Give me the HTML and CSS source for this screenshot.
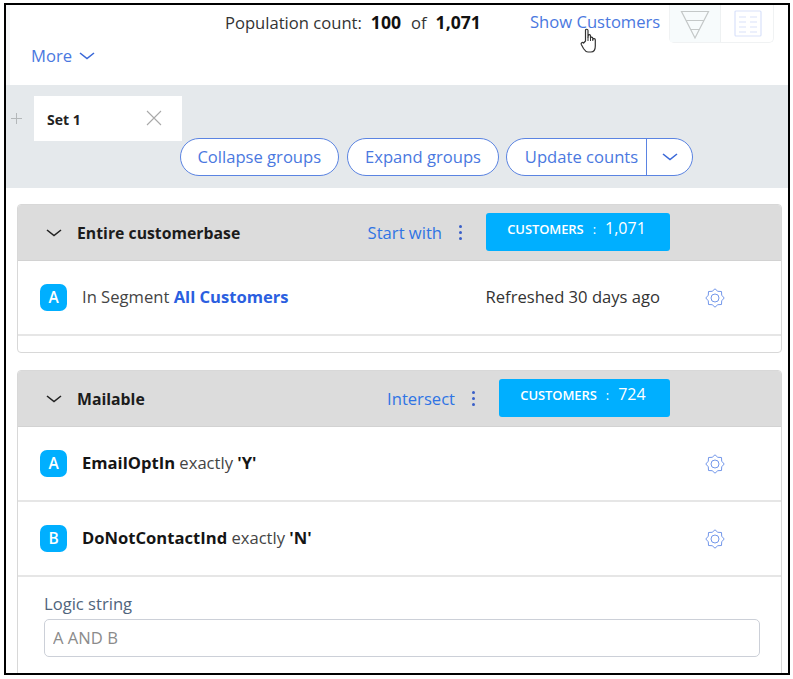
FILE: index.html
```html
<!DOCTYPE html>
<html lang="en">

<head>
    <meta charset="UTF-8">
    <title>Segment groups</title>
    <link rel="stylesheet" href="styles.css">
</head>

<body>
    <svg class="defs" width="0" height="0">
        <symbol id="gear" viewBox="0 0 20 20">
            <path d="M10 .8 12.8 3.3 16.5 3.5 16.7 7.2 19.2 10 16.7 12.8 16.5 16.5 12.8 16.7 10 19.2 7.2 16.7 3.5 16.5 3.3 12.8 .8 10 3.3 7.2 3.5 3.5 7.2 3.3Z" fill="none" stroke="currentColor" stroke-width="1" stroke-linejoin="round"/>
            <circle cx="10" cy="10" r="4" fill="none" stroke="currentColor" stroke-width="1"/>
        </symbol>
        <symbol id="chev" viewBox="0 0 16 8">
            <path d="M1 1 8 6.6 15 1" fill="none" stroke="currentColor" stroke-width="1.6"/>
        </symbol>
    </svg>

    <div class="frame">
        <!-- Top bar -->
        <div class="top">
            <div class="top-row">
                <span class="count">Population count:<b>100</b>of<b>1,071</b></span>
                <a class="show-link">Show Customers</a>
                <div class="views">
                    <div class="view view-on">
                        <svg width="30" height="30" viewBox="0 0 30 30" fill="none" stroke="#c4c8c8" stroke-width="1.2">
                            <path d="M1.5 1.5H28.5L15 28Z"/>
                            <path d="M6 10.5H24M10.5 19.5H19.5"/>
                        </svg>
                    </div>
                    <div class="view view-table">
                        <svg width="28" height="28" viewBox="0 0 28 28" fill="none" stroke="#d9e2fa" stroke-width="1.2">
                            <rect x="1" y="1" width="26" height="25" rx="1"/>
                            <path d="M5 7H12M16 7H23M5 12H12M16 12H23M5 17H12M16 17H23M5 22H12M16 22H23"/>
                        </svg>
                    </div>
                </div>
            </div>
            <a class="more">More <svg class="more-chev" width="16" height="8"><use href="#chev"/></svg></a>
        </div>

        <!-- Set tabs and buttons -->
        <div class="toolbar">
            <div class="tab-row">
                <svg class="plus" width="11" height="11" viewBox="0 0 11 11" stroke="#b4b8ba" stroke-width="1"><path d="M5.5 0V11M0 5.5H11"/></svg>
                <div class="tab">
                    <span>Set 1</span>
                    <svg width="16" height="16" viewBox="0 0 16 16" stroke="#a9a9a9" stroke-width="1.1"><path d="M1 1 15 15M15 1 1 15"/></svg>
                </div>
            </div>
            <div class="btn-row">
                <button class="pill">Collapse groups</button>
                <button class="pill">Expand groups</button>
                <div class="split">
                    <button class="split-main">Update counts</button>
                    <button class="split-arrow"><svg width="16" height="8"><use href="#chev"/></svg></button>
                </div>
            </div>
        </div>

        <div class="groups">
            <section class="card card-first">
                <div class="card-head">
                    <svg class="head-chev" width="16" height="8"><use href="#chev"/></svg>
                    <h3>Entire customerbase</h3>
                    <a class="action">Start with</a>
                    <span class="dots"><i></i><i></i><i></i></span>
                    <div class="badge badge-wide"><span class="badge-label">CUSTOMERS</span><span class="badge-sep">:</span><span class="badge-num">1,071</span></div>
                </div>
                <div class="rule-row">
                    <span class="letter">A</span>
                    <p class="rule-text">In Segment <a>All Customers</a></p>
                    <span class="refreshed">Refreshed 30 days ago</span>
                    <svg class="gear" width="20" height="20"><use href="#gear"/></svg>
                </div>
            </section>

            <section class="card">
                <div class="card-head">
                    <svg class="head-chev" width="16" height="8"><use href="#chev"/></svg>
                    <h3>Mailable</h3>
                    <a class="action">Intersect</a>
                    <span class="dots"><i></i><i></i><i></i></span>
                    <div class="badge"><span class="badge-label">CUSTOMERS</span><span class="badge-sep">:</span><span class="badge-num">724</span></div>
                </div>
                <div class="rule-row">
                    <span class="letter">A</span>
                    <p class="rule-text"><b>EmailOptIn</b> exactly <b>'Y'</b></p>
                    <svg class="gear" width="20" height="20"><use href="#gear"/></svg>
                </div>
                <div class="rule-row">
                    <span class="letter">B</span>
                    <p class="rule-text"><b>DoNotContactInd</b> exactly <b>'N'</b></p>
                    <svg class="gear" width="20" height="20"><use href="#gear"/></svg>
                </div>
                <div class="logic">
                    <label for="logic">Logic string</label>
                    <input type="text" id="logic" placeholder="A AND B">
                </div>
            </section>
        </div>

        <!-- Mouse pointer caught in the capture -->
        <svg class="hand" width="18" height="25" viewBox="0 0 18 25">
            <path d="M5.5 13V2.5C5.5.8 8 .8 8 2.5V9.5L8.3 7.5C8.6 6.2 10.4 6.4 10.5 7.8V10C10.7 8.8 12.6 8.9 12.8 10.2V11.2C13.2 10.2 15.2 10.4 15.3 11.8V18C15.3 21 14 24 11 24H8C5.5 24 4.8 22.5 3.5 20.5L1.3 16.5C.6 15 2.4 13.8 3.6 15Z" fill="#fff" stroke="#333" stroke-width="1.2" stroke-linejoin="round"/>
            <path d="M8 9.5V13M10.5 10V13M12.8 11V13" fill="none" stroke="#333" stroke-width="1"/>
        </svg>
    </div>
</body>

</html>
```

FILE: styles.css
```css
/* Basic styling */
* {
    box-sizing: border-box;
}

body {
    margin: 0;
    background: #ffffff;
    font-family: "Open Sans", "Liberation Sans", sans-serif;
    font-size: 16.6px;
    color: #333;
}

a {
    color: #4a78e0;
}

.defs {
    display: block;
    height: 0;
}

.frame {
    position: relative;
    width: 786px;
    height: 672px;
    margin: 3px 0 0 4px;
    border: 2px solid #000;
    background: #fff;
    overflow: hidden;
}

/* Top bar */
.top {
    height: 80px;
    border-left: 4px solid #f6f7f8;
    background: #fff;
}

.top-row {
    display: flex;
    align-items: flex-start;
    height: 38px;
    padding-left: 215px;
}

.count {
    width: 305px;
    padding-top: 5px;
    white-space: nowrap;
}

.count b {
    margin: 0 10px 0 9px;
    font-size: 17.6px;
    font-weight: 700;
    color: #111;
}

.show-link {
    width: 139px;
    padding-top: 5px;
    white-space: nowrap;
}

.views {
    display: flex;
    width: 105px;
    height: 38px;
    border: 1px solid #f0f2f3;
    border-top: 0;
    border-radius: 0 0 5px 5px;
}

.view {
    display: flex;
    justify-content: center;
    padding-top: 5px;
    flex: 1;
}

.view-on {
    background: #f7fbfc;
    border-right: 1px solid #eef1f2;
}

.view-table {
    padding-left: 3px;
}

.more {
    display: block;
    margin: 2px 0 0 21px;
    line-height: 22px;
}

.more-chev {
    margin-left: 3px;
    color: #3a68d8;
    vertical-align: 2px;
}

/* Tabs and buttons */
.toolbar {
    height: 103px;
    background: #e5e9ec;
}

.tab-row {
    display: flex;
    align-items: flex-start;
    height: 52.5px;
    padding: 11px 0 0 5px;
}

.plus {
    flex: none;
    margin: 17px 12px 0 0;
}

.tab {
    display: flex;
    justify-content: space-between;
    width: 148px;
    height: 45px;
    padding: 14px 20px 0 13px;
    background: #fff;
    font-size: 14px;
    font-weight: 700;
    color: #222;
    line-height: 20px;
}

.btn-row {
    display: flex;
    gap: 8px;
    padding-left: 173.5px;
}

.pill,
.split {
    height: 38px;
    border: 1px solid #5b84e2;
    border-radius: 19px;
    background: #fff;
    color: #4a78e0;
    font: 16.6px "Open Sans", "Liberation Sans", sans-serif;
}

.pill {
    width: 159.5px;
    padding: 0;
}

.pill + .pill {
    width: 152px;
}

.split {
    display: flex;
    width: 187px;
    margin-left: -1px;
    overflow: hidden;
}

.split button {
    border: 0;
    background: none;
    color: #4a78e0;
    font: inherit;
    padding: 0;
}

.split .split-main {
    width: 140px;
    padding-left: 10px;
    border-right: 1px solid #5b84e2;
}

.split-arrow {
    flex: 1;
}

.split-arrow svg {
    color: #3a68d8;
    vertical-align: 2px;
}

/* Group cards */
.groups {
    display: flex;
    flex-direction: column;
    gap: 17px;
    padding: 16px 6px 0 11px;
}

.card {
    border: 1px solid #d8d8d8;
    border-radius: 4px;
    background: #fff;
}

.card-first {
    height: 149px;
}

.card-head {
    display: flex;
    align-items: center;
    height: 56px;
    padding-right: 111px;
    background: #dcdcdc;
    border-bottom: 1px solid #d2d2d2;
    border-radius: 3px 3px 0 0;
}

.head-chev {
    flex: none;
    margin-left: 28px;
    color: #222;
}

.card-head h3 {
    flex: 1;
    margin: 0 0 0 15px;
    font-size: 15.8px;
    font-weight: 700;
    color: #1c1c1c;
}

.action {
    color: #2f74e4;
}

.dots {
    display: flex;
    flex-direction: column;
    gap: 3px;
    align-items: center;
    width: 10px;
    margin: 0 21px 0 13px;
}

.dots i {
    width: 3px;
    height: 3px;
    border-radius: 50%;
    background: #3a5fc8;
}

.badge {
    display: flex;
    justify-content: center;
    align-items: baseline;
    width: 171px;
    height: 38px;
    margin-top: -2px;
    padding: 4px 3px 0 0;
    border-radius: 3px;
    background: #00afff;
    color: #fff;
}

.badge-wide {
    width: 184px;
}

.badge-label {
    font-size: 13px;
    font-weight: 600;
    letter-spacing: -.1px;
}

.badge-sep {
    margin: 0 9px;
    font-size: 13px;
}

.badge-num {
    font-size: 16px;
    font-weight: 500;
}

.rule-row {
    display: flex;
    align-items: center;
    height: 74.5px;
    padding: 0 56px 0 22px;
    border-bottom: 2px solid #e6e6e6;
}

.rule-row + .rule-row {
    height: 75px;
}

.letter {
    flex: none;
    display: flex;
    justify-content: center;
    align-items: center;
    width: 27px;
    height: 27px;
    border-radius: 7px;
    background: #00afff;
    color: #fff;
    font-size: 15.5px;
    font-weight: 600;
}

.rule-text {
    flex: 1;
    margin: 0 0 2px 15px;
    color: #444;
}

.rule-text b {
    color: #151515;
}

.rule-text a {
    font-weight: 700;
    color: #2b5fe0;
}

.refreshed {
    margin: 0 45px 2px 0;
    color: #333;
}

.gear {
    flex: none;
    margin-top: 2px;
    color: #7397ea;
}

.logic {
    padding: 15px 21px 40px 26px;
}

.logic label {
    display: block;
    margin-bottom: 4.5px;
    color: #50647c;
    line-height: 23px;
}

.logic input {
    display: block;
    width: 100%;
    height: 37.5px;
    padding: 0 8px;
    border: 1px solid #ccd0d8;
    border-radius: 5px;
    font: 16.6px "Open Sans", "Liberation Sans", sans-serif;
}

.logic input::placeholder {
    color: #8b8b8b;
    opacity: 1;
}

/* Pointer */
.hand {
    position: absolute;
    top: 23px;
    left: 574px;
}
```
